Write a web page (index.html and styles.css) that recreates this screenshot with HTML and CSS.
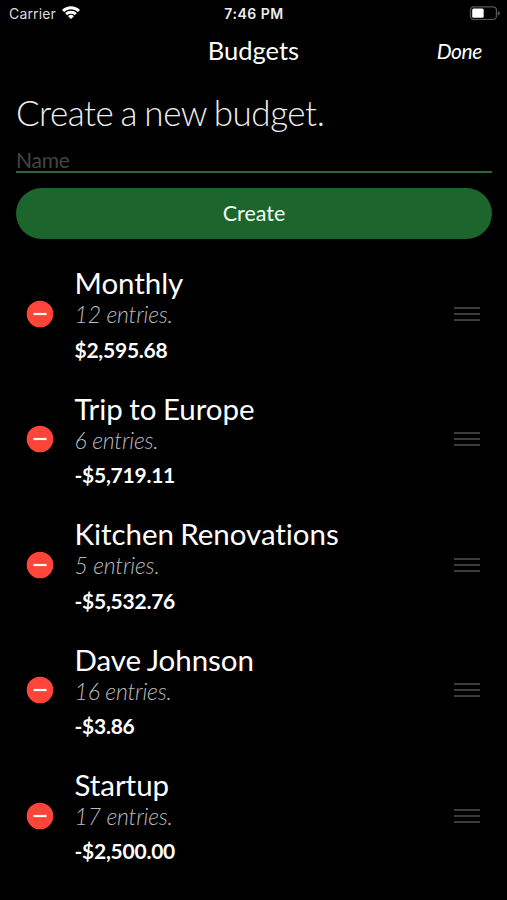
FILE: index.html
```html
<!DOCTYPE html>
<html lang="en">
<head>
<meta charset="utf-8">
<title>Budgets</title>
<link rel="stylesheet" href="styles.css">
</head>
<body>
<header class="status">
  <div class="carrier"><span>Carrier</span>
    <svg class="wifi" viewBox="0 0 18 14" width="18" height="14"><path d="M0 3.900a13 13 0 0 1 18 0L15.900 6.100a10 10 0 0 0-13.800 0zM3.100 7.100a8.500 8.500 0 0 1 11.800 0L12.800 9.200a5.600 5.600 0 0 0-7.600 0zM6.100 10.200a4.200 4.200 0 0 1 5.800 0L9 13.100z"/></svg>
  </div>
  <div class="time">7:46 PM</div>
  <svg class="battery" viewBox="0 0 32 14" width="32" height="14"><rect class="shell" x="1.500" y=".8" width="26" height="12.800" rx="3.500"/><rect class="charge" x="3.200" y="2.600" width="11.500" height="9.200" rx="1.500"/><path class="tip" d="M28.800 5v4.500q2-.7 2-2.200t-2-2.300z"/></svg>
</header>
<nav class="nav"><h1>Budgets</h1><a class="done">Done</a></nav>
<main>
  <section class="form">
    <h2>Create a new budget.</h2>
    <div class="field">Name</div>
    <button class="create">Create</button>
  </section>
  <ul class="list">
    <li class="row"><svg class="remove" viewBox="0 0 28 28"><circle cx="14" cy="14" r="13.300"/><path d="M7.500 14h13"/></svg><div class="info"><h3>Monthly</h3><em>12 entries.</em><strong>$2,595.68</strong></div><svg class="grip" viewBox="0 0 28 16"><path d="M1 2h26M1 8h26M1 14h26"/></svg></li>
    <li class="row"><svg class="remove" viewBox="0 0 28 28"><circle cx="14" cy="14" r="13.300"/><path d="M7.500 14h13"/></svg><div class="info"><h3>Trip to Europe</h3><em>6 entries.</em><strong>-$5,719.11</strong></div><svg class="grip" viewBox="0 0 28 16"><path d="M1 2h26M1 8h26M1 14h26"/></svg></li>
    <li class="row"><svg class="remove" viewBox="0 0 28 28"><circle cx="14" cy="14" r="13.300"/><path d="M7.500 14h13"/></svg><div class="info"><h3>Kitchen Renovations</h3><em>5 entries.</em><strong>-$5,532.76</strong></div><svg class="grip" viewBox="0 0 28 16"><path d="M1 2h26M1 8h26M1 14h26"/></svg></li>
    <li class="row"><svg class="remove" viewBox="0 0 28 28"><circle cx="14" cy="14" r="13.300"/><path d="M7.500 14h13"/></svg><div class="info"><h3>Dave Johnson</h3><em>16 entries.</em><strong>-$3.86</strong></div><svg class="grip" viewBox="0 0 28 16"><path d="M1 2h26M1 8h26M1 14h26"/></svg></li>
    <li class="row"><svg class="remove" viewBox="0 0 28 28"><circle cx="14" cy="14" r="13.300"/><path d="M7.500 14h13"/></svg><div class="info"><h3>Startup</h3><em>17 entries.</em><strong>-$2,500.00</strong></div><svg class="grip" viewBox="0 0 28 16"><path d="M1 2h26M1 8h26M1 14h26"/></svg></li>
  </ul>
</main>
</body>
</html>
```
FILE: styles.css
```css
* { box-sizing: border-box; margin: 0; padding: 0; }
body { height: 900px; overflow: hidden; background: #000; color: #fff; font-family: Lato, sans-serif; font-variant-ligatures: none; }
svg { display: block; }
.status { display: grid; grid-template-columns: 1fr auto 1fr; align-items: center; height: 26px; padding: 0 6px 0 9px; font: 14px Inter, sans-serif; }
.carrier { display: flex; align-items: center; gap: 6px; color: #ddd; letter-spacing: .15px; }
.wifi { fill: #fff; }
.time { color: #eee; font-weight: 600; letter-spacing: .5px; margin-right: 2px; }
.battery { justify-self: end; }
.shell { fill: none; stroke: #555; stroke-width: 1.300; }
.charge { fill: #fff; }
.tip { fill: #555; }
.nav { display: grid; grid-template-columns: 1fr auto 1fr; align-items: center; height: 47px; padding: 0 25px; }
.nav h1 { grid-column: 2; font-size: 25.500px; font-weight: 400; line-height: 30px; }
.done { justify-self: end; padding-top: 2px; font-size: 21px; font-style: italic; letter-spacing: -.4px; }
.form { padding: 17px 15px 0 16px; }
.form h2 { color: #eee; font-size: 35px; font-weight: 300; line-height: 44px; letter-spacing: -.45px; word-spacing: -1.800px; }
.field { height: 39px; padding-top: 13px; border-bottom: 2px solid #2a683b; color: #444; font-size: 21px; line-height: 26px; letter-spacing: -.2px; }
.create { display: block; width: 100%; height: 51px; margin-top: 14.500px; border: 0; border-radius: 26px; background: #1c662e; color: #f3fff3; font: 21.500px Lato, sans-serif; }
.list { list-style: none; padding-top: 12.900px; }
.row { display: grid; grid-template-columns: 28px 1fr 28px; column-gap: 20.500px; align-items: center; height: 125.400px; padding: 0 26px; }
.remove { width: 28px; height: 28px; }
.remove circle { fill: #ff453a; }
.remove path { stroke: #fff; stroke-width: 2.200; }
.info { display: flex; flex-direction: column; padding-top: 1px; }
.info h3 { font-size: 29.500px; font-weight: 400; line-height: 34px; letter-spacing: -.05px; word-spacing: -1px; }
.info em { color: #bbb; font-size: 23px; font-weight: 300; line-height: 28px; letter-spacing: -.2px; }
.info strong { margin-top: 8.500px; font-size: 21px; font-weight: 700; line-height: 26px; letter-spacing: -.25px; }
.grip { width: 28px; height: 16px; stroke: #3c3c3e; stroke-width: 1.800; }
```
